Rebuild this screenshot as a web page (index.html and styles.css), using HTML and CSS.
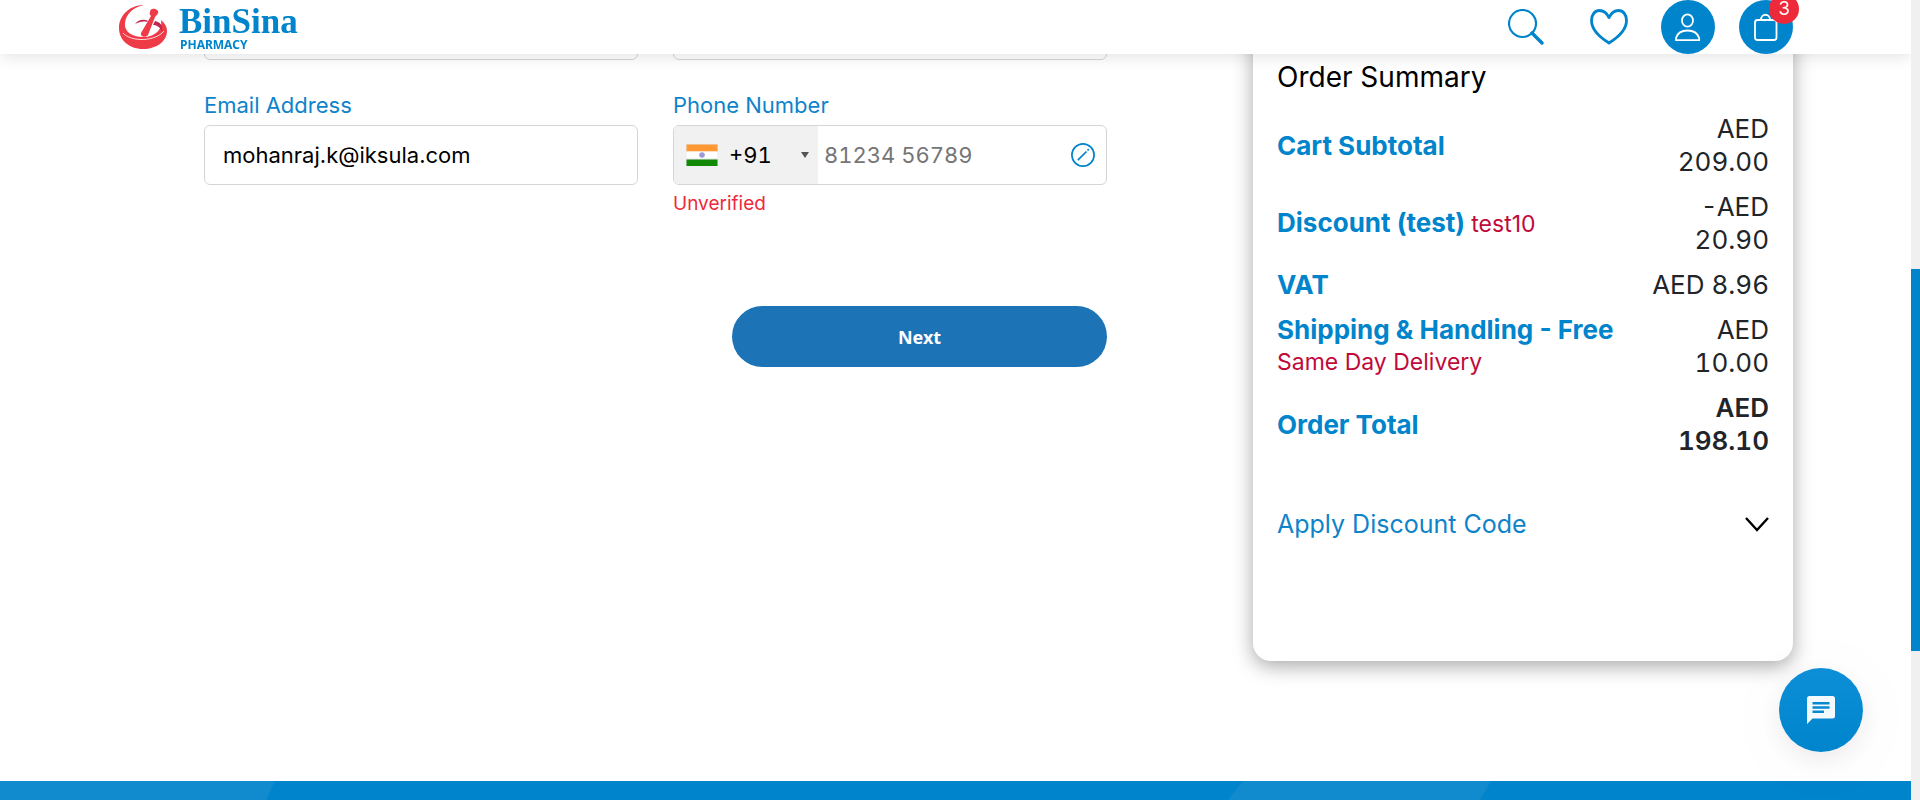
FILE: index.html
```html
<!DOCTYPE html>
<html lang="en">
<head>
<meta charset="utf-8">
<title>BinSina Pharmacy - Checkout</title>
<link rel="stylesheet" href="styles.css">
</head>
<body>
<header class="site-header">
  <a class="logo" href="#" aria-label="BinSina Pharmacy">
    <svg class="logo-mark" viewBox="0 0 48 44" aria-hidden="true">
      <path fill="#ef3b47" d="M25 0C11 0 0 10 0 23C0 35 10 44 24 44C38 44 48 36 48 26C48 22 46 18 42 15C44 23 37 31 27 32C14 33 5 27 6 18C7 9 14 2 25 0Z"/>
      <path fill="none" stroke="#fff" stroke-width=".8" d="M4 28C12 37 36 37 45 26"/>
      <path fill="#c22750" d="M16 19C20 14 25 14 29 16L28 17C24 16 20 17 16 19ZM36 16C41 17 44 20 43 27C41 22 38 20 34 20Z"/>
      <path fill="#ef3b47" d="M31 7C31 3 36 3 38 5C41 7 38 10 36 12L29 30C27 33 21 32 22 28L32 11C30.500 10 30.500 8 31 7Z"/>
    </svg>
    <span class="logo-text"><span class="logo-name">BinSina</span><span class="logo-sub">PHARMACY</span></span>
  </a>
  <nav class="tools" aria-label="Account tools">
    <button class="tool tool-search" type="button" aria-label="Search">
      <svg width="36" height="36" viewBox="0 0 36 36" fill="none" stroke="#0084cb"><circle cx="14.5" cy="14.5" r="13.5" stroke-width="2.2"/><path d="M24 24L34 34" stroke-width="3.4" stroke-linecap="round"/></svg>
    </button>
    <a class="tool tool-heart" href="#" aria-label="Wishlist">
      <svg width="38" height="36" viewBox="0 0 38 36" fill="none" stroke="#0084cb" stroke-width="2.8" stroke-linejoin="round"><path d="M19 8.500C16 2.500 12 1.500 9.500 1.500C5 1.500 1.500 5.500 1.500 11.500C1.500 21 11 29 19 34C27 29 36.500 21 36.500 11.500C36.500 5.500 33 1.500 28.500 1.500C26 1.500 22 2.500 19 8.500Z"/></svg>
    </a>
    <a class="tool round tool-user" href="#" aria-label="My account">
      <svg width="54" height="54" viewBox="0 0 54 54" fill="none" stroke="#fff" stroke-width="1.800"><ellipse cx="26.500" cy="20.500" rx="5.500" ry="6.200"/><path d="M15 40.200V38C16.500 33 21 30.500 26.500 30.500C32 30.500 36.500 33 38.200 38V40.200Z" stroke-linejoin="round"/></svg>
    </a>
    <a class="tool round" href="#" aria-label="Cart, 3 items">
      <svg width="54" height="54" viewBox="0 0 54 54" fill="none" stroke="#fff" stroke-width="1.800"><rect x="16" y="20" width="21.500" height="20" rx="2.500"/><path d="M22 20C22 13 31 13 31 20"/></svg>
      <span class="badge">3</span>
    </a>
  </nav>
</header>

<main class="checkout">
  <form class="details">
    <div class="field"><input class="text-box" type="text" aria-label="First name"></div>
    <div class="field"><input class="text-box" type="text" aria-label="Last name"></div>
    <div class="field">
      <label class="label" for="email">Email Address</label>
      <input class="text-box" id="email" type="email" value="mohanraj.k@iksula.com">
    </div>
    <div class="field">
      <label class="label" for="phone">Phone Number</label>
      <div class="phone-box">
        <button class="dial-code" type="button" aria-label="Country code, India +91">
          <svg width="32" height="22" viewBox="0 0 32 22" aria-hidden="true"><path fill="#e6e6ea" d="M0 0H32V22H0Z"/><path fill="#ff9933" d="M.5.500H31.500V7.500H.5Z"/><path fill="#fff" d="M.5 7.500H31.500V14.500H.5Z"/><path fill="#128807" d="M.5 15.500H31.500V22H.5Z"/><circle cx="16" cy="11" r="2.800" fill="#9a9ad8"/></svg>
          <span class="code">+91</span>
          <span class="caret"></span>
        </button>
        <input class="phone-input" id="phone" type="tel" placeholder="81234 56789">
        <button class="edit" type="button" aria-label="Edit phone number">
          <svg width="24" height="24" viewBox="0 0 24 24" fill="none" stroke="#0084cb"><circle cx="12" cy="12" r="11.100" stroke-width="1.700"/><path d="M6.800 17.200L15.500 8.500M16.500 7.500L17.800 6.200" stroke-width="1.700"/></svg>
        </button>
      </div>
      <p class="status">Unverified</p>
    </div>
    <button class="next" type="button">Next</button>
  </form>

  <section class="summary">
    <h2 class="summary-title">Order Summary</h2>
    <table class="totals">
      <tbody>
        <tr><th scope="row">Cart Subtotal</th><td>AED 209.00</td></tr>
        <tr><th scope="row">Discount (test) <span class="note">test10</span></th><td>-AED 20.90</td></tr>
        <tr><th scope="row">VAT</th><td>AED 8.96</td></tr>
        <tr><th scope="row">Shipping &amp; Handling - Free <span class="note note-line">Same Day Delivery</span></th><td>AED 10.00</td></tr>
        <tr class="grand"><th scope="row">Order Total</th><td>AED 198.10</td></tr>
      </tbody>
    </table>
    <button class="discount" type="button">Apply Discount Code
      <svg width="24" height="15" viewBox="0 0 24 15" fill="none" stroke="#000" stroke-width="2.400" aria-hidden="true"><path d="M1 1L12 13L23 1"/></svg>
    </button>
  </section>
</main>

<footer class="site-footer">
  <svg class="stripes" viewBox="0 0 1911 19" preserveAspectRatio="none" aria-hidden="true"><path fill="#118bce" d="M0 0H275L266 19H0ZM1243 0H1491L1480 19H1228Z"/></svg>
</footer>

<button class="chat" type="button" aria-label="Open chat">
  <svg width="28" height="28" viewBox="0 0 28 28" aria-hidden="true"><path fill="#f3faff" d="M2.500 0H25.500Q28 0 28 2.500V20Q28 22.500 25.500 22.500H5.500L0 28V2.500Q0 0 2.500 0Z"/><path stroke="#0788d0" stroke-width="2.400" d="M5.500 7.200H22.500M5.500 11.500H22.500M5.500 15.800H17"/></svg>
</button>
<div class="scroll-track" aria-hidden="true"><div class="scroll-thumb"></div></div>
</body>
</html>
```
FILE: styles.css
```css
* { box-sizing: border-box; }
html, body { height: 100%; }
body {
  display: flex;
  flex-direction: column;
  margin: 0;
  padding-right: 9px;
  overflow: hidden;
  background: #fff;
  color: #212529;
  font-family: Inter, "Liberation Sans", sans-serif;
}
button { border: 0; padding: 0; background: none; font: inherit; cursor: pointer; }
svg { display: block; }

.site-header {
  position: fixed;
  z-index: 2;
  top: 0;
  left: 0;
  right: 9px;
  display: flex;
  justify-content: space-between;
  align-items: center;
  height: 54px;
  padding: 0 118px 0 119px;
  background: #fff;
  box-shadow: 0 2px 16px rgba(0, 0, 0, .12);
}
.logo { display: flex; align-items: center; gap: 12px; color: #0084cb; text-decoration: none; }
.logo-mark { width: 48px; height: 44px; }
.logo-text { display: flex; flex-direction: column; }
.logo-name { font: bold 35px/36px "Liberation Serif", serif; }
.logo-sub { padding-left: 1px; font: bold 12px/10px "Noto Sans", sans-serif; }
.tools { display: flex; align-items: center; }
.tool { position: relative; display: block; }
.tool-search { margin-right: 46px; }
.tool-heart { margin-right: 33px; }
.tool-user { margin-right: 24px; }
.round { width: 54px; height: 54px; border-radius: 50%; background: #0084cb; }
.badge {
  position: absolute;
  top: -6px;
  right: -6px;
  width: 30px;
  height: 30px;
  border-radius: 50%;
  background: #ee2a3a;
  color: #fff;
  font-size: 19px;
  line-height: 30px;
  text-align: center;
}

.checkout {
  flex: 1;
  display: grid;
  grid-template-columns: minmax(0, 903fr) minmax(0, 540fr);
  column-gap: 146px;
  align-items: start;
  padding: 0 118px 0 204px;
}
.details { display: grid; grid-template-columns: repeat(2, minmax(0, 1fr)); column-gap: 35px; }
.label { display: block; padding: 30px 0 5px; color: #0f83ca; font-size: 22px; font-weight: 400; line-height: 30px; }
.text-box, .phone-box {
  width: 100%;
  height: 60px;
  border: 1px solid #d5d5d8;
  border-radius: 6px;
  background: #fff;
}
.text-box { display: block; padding: 0 18px; color: #000; font: 400 22px/30px Inter, sans-serif; }
.phone-box { display: flex; align-items: center; padding-right: 11px; }
.dial-code {
  display: flex;
  align-items: center;
  align-self: stretch;
  width: 144px;
  padding: 0 9px 0 12px;
  border-radius: 5px 0 0 5px;
  background: #f1f1f1;
  color: #000;
  font-size: 22px;
  font-variant-numeric: tabular-nums;
}
.code { flex: 1; padding-left: 11px; text-align: left; }
.caret { border: 4px solid transparent; border-top: 6px solid #555; border-bottom: 0; }
.phone-input {
  flex: 1;
  min-width: 0;
  padding: 0 6px;
  border: 0;
  background: none;
  font: 400 22px/30px Inter, sans-serif;
  font-variant-numeric: tabular-nums;
}
.phone-input::placeholder { color: #757575; opacity: 1; }
.status { margin: 6px 0 0; color: #ee2a3a; font-size: 19px; font-weight: 400; line-height: 26px; }
.next {
  grid-column: 2;
  justify-self: end;
  width: 375px;
  max-width: 100%;
  height: 61px;
  margin-top: 89px;
  border-radius: 31px;
  background: #1c73b6;
  color: #fff;
  font: bold 18px/24px "Noto Sans", sans-serif;
}

.summary {
  min-height: 661px;
  padding: 58px 24px 0;
  border-radius: 0 0 18px 18px;
  background: #fff;
  box-shadow: 0 5px 20px rgba(0, 0, 0, .35);
}
.summary-title { margin: 0 0 10px; color: #000; font-size: 28px; font-weight: 400; line-height: 38px; }
.totals { width: 100%; border-collapse: collapse; font-size: 26px; line-height: 33px; }
.totals th, .totals td { padding: 6px 0; vertical-align: middle; }
.totals th { color: #0084cb; font-weight: 700; text-align: left; }
.totals td { width: 132px; padding-left: 10px; font-weight: 400; font-variant-numeric: tabular-nums; text-align: right; }
.totals .grand td { font-weight: 600; }
.note { color: #bf0a3a; font-size: 23px; font-weight: 400; }
.note-line { display: block; }
.discount {
  display: flex;
  justify-content: space-between;
  align-items: center;
  width: 100%;
  margin-top: 45px;
  color: #0f83ca;
  font-size: 25px;
  font-weight: 400;
  line-height: 33px;
}

.site-footer { flex: none; height: 19px; background: #0084cb; }
.stripes { width: 100%; height: 19px; }

.chat {
  position: fixed;
  z-index: 3;
  right: 57px;
  bottom: 48px;
  display: grid;
  place-items: center;
  width: 84px;
  height: 84px;
  border-radius: 50%;
  background: linear-gradient(#0c8fd6, #0084cb);
  box-shadow: 0 8px 24px rgba(60, 0, 40, .08), 0 8px 80px rgba(0, 0, 0, .04);
}
.scroll-track { position: fixed; z-index: 4; top: 0; right: 0; bottom: 0; width: 9px; padding-top: 269px; background: #f0f0f0; }
.scroll-thumb { height: 382px; background: #0084cb; }
```
